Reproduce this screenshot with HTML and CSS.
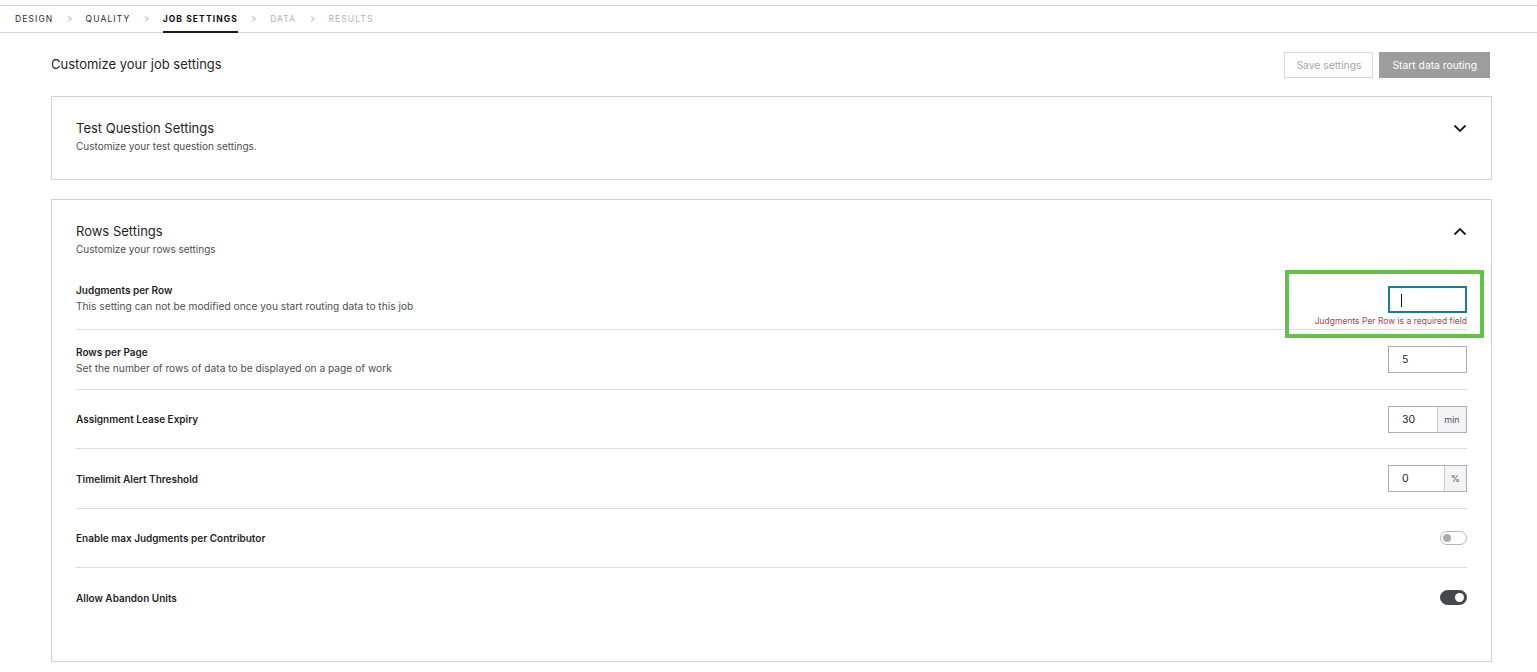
FILE: index.html
```html
<!DOCTYPE html>
<html lang="en">
<head>
    <meta charset="UTF-8">
    <meta name="viewport" content="width=device-width, initial-scale=1.0">
    <title>Job Settings</title>
    <link rel="stylesheet" href="styles.css">
</head>
<body>
    <nav class="steps">
        <a class="step">Design</a>
        <span class="step-sep">&gt;</span>
        <a class="step">Quality</a>
        <span class="step-sep">&gt;</span>
        <a class="step active">Job Settings</a>
        <span class="step-sep">&gt;</span>
        <a class="step disabled">Data</a>
        <span class="step-sep">&gt;</span>
        <a class="step disabled">Results</a>
    </nav>

    <main class="settings-page">
        <div class="page-header">
            <h1>Customize your job settings</h1>
            <div class="actions">
                <button class="btn btn-outline" disabled>Save settings</button>
                <button class="btn btn-primary" disabled>Start data routing</button>
            </div>
        </div>

        <!-- collapsed section -->
        <section class="card">
            <div class="card-head">
                <div>
                    <h2>Test Question Settings</h2>
                    <p class="card-sub">Customize your test question settings.</p>
                </div>
                <svg class="chevron" width="14" height="9" viewBox="0 0 14 9"><path d="M1.5 1.5 L7 7 L12.5 1.5" fill="none" stroke="#1c1c1c" stroke-width="1.8"/></svg>
            </div>
        </section>

        <!-- expanded section -->
        <section class="card">
            <div class="card-head">
                <div>
                    <h2>Rows Settings</h2>
                    <p class="card-sub">Customize your rows settings</p>
                </div>
                <svg class="chevron" width="14" height="9" viewBox="0 0 14 9"><path d="M1.5 7.5 L7 2 L12.5 7.5" fill="none" stroke="#1c1c1c" stroke-width="1.8"/></svg>
            </div>

            <div class="rows">
                <div class="row row-error">
                    <div class="row-text">
                        <h3>Judgments per Row</h3>
                        <p>This setting can not be modified once you start routing data to this job</p>
                    </div>
                    <div class="field-col">
                        <div class="field focused">
                            <input type="text" value="">
                            <span class="caret"></span>
                        </div>
                        <p class="field-error">Judgments Per Row is a required field</p>
                    </div>
                    <div class="highlight"></div>
                </div>

                <div class="row">
                    <div class="row-text">
                        <h3>Rows per Page</h3>
                        <p>Set the number of rows of data to be displayed on a page of work</p>
                    </div>
                    <div class="field">
                        <input type="text" value="5">
                    </div>
                </div>

                <div class="row">
                    <div class="row-text">
                        <h3>Assignment Lease Expiry</h3>
                    </div>
                    <div class="field">
                        <input type="text" value="30">
                        <span class="addon">min</span>
                    </div>
                </div>

                <div class="row">
                    <div class="row-text">
                        <h3>Timelimit Alert Threshold</h3>
                    </div>
                    <div class="field">
                        <input type="text" value="0">
                        <span class="addon addon-sm">%</span>
                    </div>
                </div>

                <div class="row">
                    <div class="row-text">
                        <h3>Enable max Judgments per Contributor</h3>
                    </div>
                    <span class="toggle"></span>
                </div>

                <div class="row">
                    <div class="row-text">
                        <h3>Allow Abandon Units</h3>
                    </div>
                    <span class="toggle on"></span>
                </div>
            </div>
        </section>
    </main>
</body>
</html>
```

FILE: styles.css
```css
body {
    font-family: 'Inter', 'Liberation Sans', sans-serif;
    margin: 0;
    padding: 5px 0 0;
    color: #1f1f1f;
    background: #fff;
}

/* step navigation */
.steps {
    display: flex;
    align-items: center;
    height: 26px;
    padding-left: 15px;
    border-top: 1px solid #d4d4d4;
    border-bottom: 1px solid #d4d4d4;
}
.step {
    position: relative;
    display: flex;
    align-items: center;
    height: 100%;
    font-size: 8.5px;
    letter-spacing: 1.1px;
    text-transform: uppercase;
    color: #2a2a2a;
}
.step.active {
    font-weight: 700;
    color: #111;
}
.step.active::after {
    content: "";
    position: absolute;
    left: 0;
    right: 0;
    bottom: -1px;
    height: 2px;
    background: #1c1c1c;
}
.step.disabled {
    color: #b3b3b3;
}
.step-sep {
    margin: 0 12.5px;
    font-size: 11px;
    color: #b9b9b9;
    transform: scaleX(0.7);
}

.settings-page {
    margin: 18px 45px 0 51px;
}
.page-header {
    display: flex;
    justify-content: space-between;
    align-items: center;
    margin-right: 2px;
}
.page-header h1 {
    margin: 0;
    font-size: 13px;
    font-weight: 400;
    line-height: 27px;
}
.actions {
    display: flex;
    gap: 6px;
}
.btn {
    height: 26px;
    padding: 0 11px;
    font-family: inherit;
    font-size: 10.3px;
    border-radius: 0;
}
.btn-outline {
    background: #fff;
    border: 1px solid #d8d8d8;
    color: #a6a6a6;
}
.btn-primary {
    background: #9d9d9d;
    border: 1px solid #9d9d9d;
    color: #fff;
    padding: 0 12px;
}

.card {
    margin-top: 18px;
    border: 1px solid #d2d2d2;
    padding: 22px 24px 26px;
}
.card + .card {
    margin-top: 19px;
}
.card-head {
    display: flex;
    justify-content: space-between;
    align-items: flex-start;
}
.card h2 {
    margin: 0;
    font-size: 13px;
    font-weight: 400;
    line-height: 18px;
}
.card-sub {
    margin: 2px 0 0;
    font-size: 10px;
    line-height: 14px;
    color: #4e4e4e;
}
.chevron {
    margin-top: 5px;
}

/* setting rows */
.rows {
    margin-top: 13px;
    padding-bottom: 8px;
}
.row {
    position: relative;
    display: flex;
    justify-content: space-between;
    align-items: center;
    height: 27px;
    padding: 16px 0 15.5px;
    border-bottom: 1px solid #dcdcdc;
}
.row:last-child {
    border-bottom: none;
}
.row-error {
    align-items: flex-start;
    height: auto;
    padding: 14px 0 2px;
}
.row-error .field {
    margin-top: 3px;
}
.row-text h3 {
    margin: 0;
    font-size: 10px;
    font-weight: 600;
    line-height: 14px;
}
.row-text p {
    margin: 2px 0 0;
    font-size: 10.2px;
    line-height: 14px;
    color: #4e4e4e;
}

.field-col {
    display: flex;
    flex-direction: column;
    align-items: flex-end;
}
.field {
    position: relative;
    display: flex;
    width: 79px;
    height: 27px;
    box-sizing: border-box;
    border: 1px solid #a9afb3;
}
.field input {
    flex: 1;
    min-width: 0;
    border: none;
    outline: none;
    padding: 0 0 0 13px;
    font-family: inherit;
    font-size: 10.5px;
    color: #1f1f1f;
    background: transparent;
}
.field.focused {
    border: 2px solid #1d7b93;
}
.caret {
    position: absolute;
    left: 11px;
    top: 6px;
    width: 1px;
    height: 13px;
    background: #111;
}
.addon {
    display: flex;
    align-items: center;
    justify-content: center;
    width: 28px;
    font-size: 9px;
    color: #555;
    background: #f3f3f5;
    border-left: 1px solid #c9cdd0;
}
.addon-sm {
    width: 21px;
}
.field-error {
    margin: 2px 0 0;
    font-size: 8.5px;
    line-height: 12px;
    color: #c23a4b;
}
.highlight {
    position: absolute;
    top: 1px;
    right: -17px;
    bottom: -9px;
    width: 199px;
    box-sizing: border-box;
    border: 4px solid #62c146;
}

.toggle {
    position: relative;
    width: 27px;
    height: 14px;
    box-sizing: border-box;
    border: 1px solid #b5b9bd;
    border-radius: 8px;
    background: #fff;
}
.toggle::after {
    content: "";
    position: absolute;
    left: 2px;
    top: 2px;
    width: 8px;
    height: 8px;
    border-radius: 50%;
    background: #a7abae;
}
.toggle.on {
    height: 15px;
    border-color: #45494e;
    background: #45494e;
}
.toggle.on::after {
    left: auto;
    right: 2px;
    top: 2px;
    width: 9px;
    height: 9px;
    background: #fff;
}
```
